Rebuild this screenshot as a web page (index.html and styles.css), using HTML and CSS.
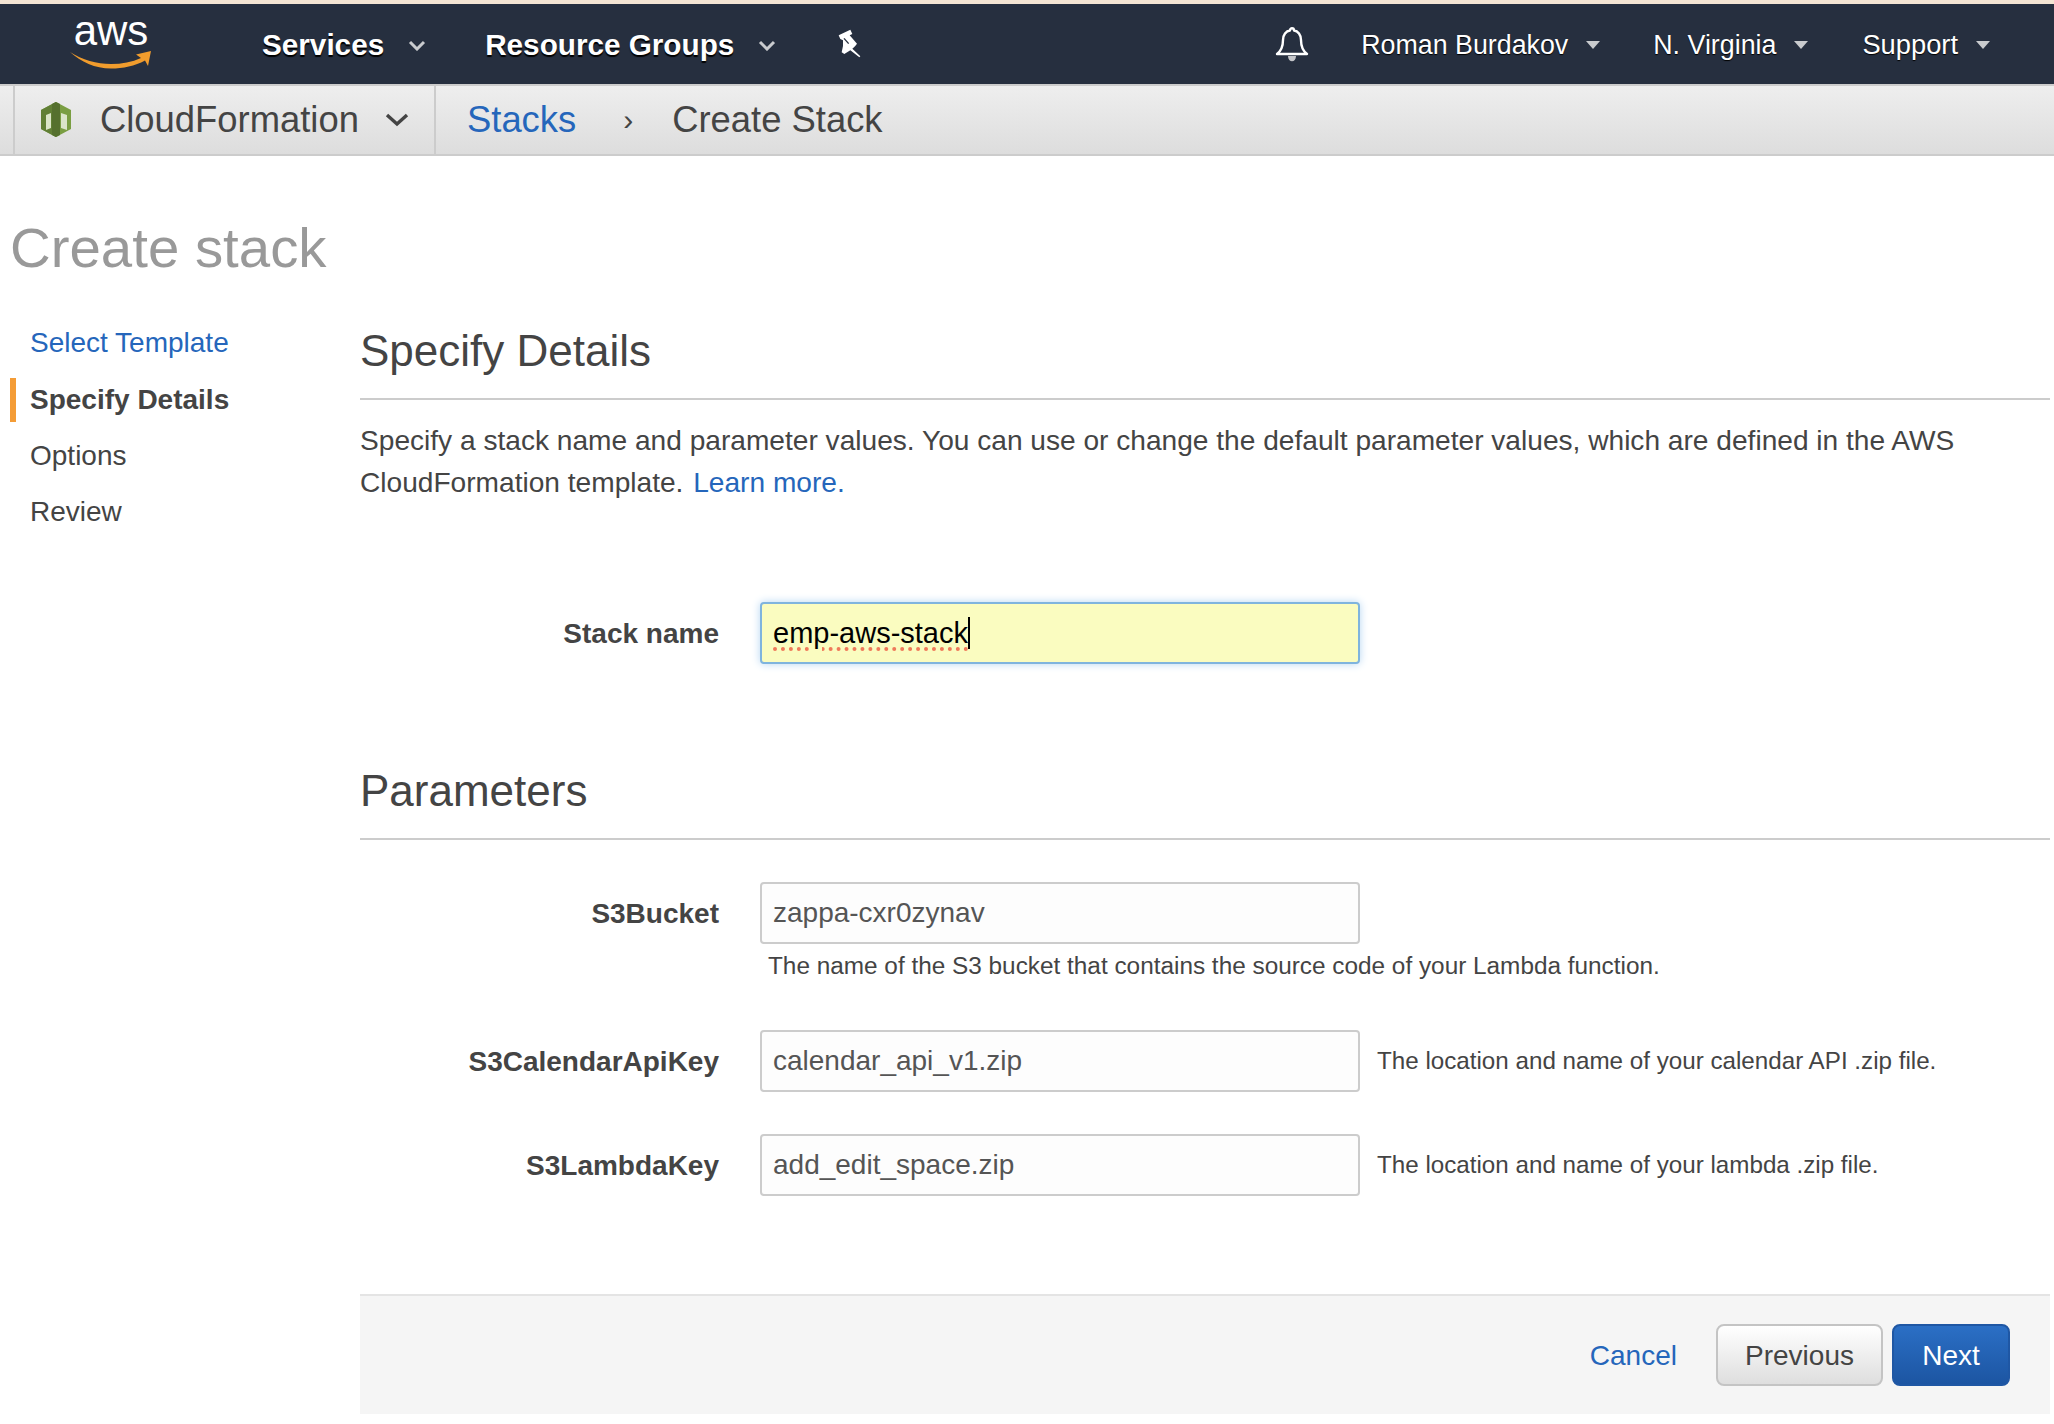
FILE: index.html
```html
<!DOCTYPE html>
<html lang="en">
<head>
  <meta charset="UTF-8">
  <title>Create stack</title>
  <link rel="stylesheet" href="styles.css">
</head>
<body>
  <header class="topbar">
    <a class="logo">
      <span class="logo-text">aws</span>
      <svg class="logo-smile" width="84" height="20" viewBox="0 0 84 20">
        <path d="M1 2C13 10 28 14 42 14C53 14 63 12 72 8L67 4.5L82 1L79 16L76 10.5C66 16 54 18.5 42 18.5C26 18.5 12 12 1 2Z" fill="#f09c2d"/>
      </svg>
    </a>
    <a class="nav-main services">Services</a>
    <svg class="chev" width="18" height="11" viewBox="0 0 18 11"><path d="M2 2L9 9L16 2" fill="none" stroke="#c9cbce" stroke-width="3"/></svg>
    <a class="nav-main groups">Resource Groups</a>
    <svg class="chev" width="18" height="11" viewBox="0 0 18 11"><path d="M2 2L9 9L16 2" fill="none" stroke="#c9cbce" stroke-width="3"/></svg>
    <svg class="pin" width="25" height="30" viewBox="38 25 75 90">
      <path d="M43 47L78 30L84 43L76 47L98 72L92 80L84 87L108 110L105 113L78 92L60 103L52 98Q58 80 56 62L48 58Z" fill="#fff"/>
      <path d="M59 56L73 72" stroke="#262f3f" stroke-width="4"/>
    </svg>
    <svg class="bell" width="34" height="36" viewBox="0 0 34 36">
      <path d="M2 27C6 24 8 20 8 13C8 8 11 4 15 3.5C15 .5 19 .5 19 3.5C23 4 26 8 26 13C26 20 28 24 32 27Z" fill="none" stroke="#fff" stroke-width="2.4" stroke-linejoin="round"/>
      <path d="M13 29C13 36 21 36 21 29Z" fill="#c4c6ca"/>
    </svg>
    <a class="nav-user user">Roman Burdakov</a><span class="caret"></span>
    <a class="nav-user region">N. Virginia</a><span class="caret"></span>
    <a class="nav-user support">Support</a><span class="caret"></span>
  </header>

  <nav class="subbar">
    <div class="service-menu">
      <svg class="cf-icon" width="32" height="36" viewBox="0 0 32 36">
        <path d="M16 0L31 8V27L16 35L1 27V8Z" fill="#7a9e42"/>
        <path d="M16 0V35L1 27V8Z" fill="#617f35"/>
        <path d="M16 0L20 2V33L16 35L12 33V2Z" fill="#55702e"/>
        <path d="M6 13L11 11V26L6 28Z M21 11L27 13V28L21 26Z" fill="#dbe5c9"/>
      </svg>
      <span class="service-name">CloudFormation</span>
      <svg class="service-chev" width="24" height="14" viewBox="0 0 24 14"><path d="M2 2L12 11L22 2" fill="none" stroke="#444" stroke-width="3.4"/></svg>
    </div>
    <a class="crumb-link">Stacks</a>
    <span class="crumb-sep">›</span>
    <span class="crumb">Create Stack</span>
  </nav>

  <h1 class="page-title">Create stack</h1>

  <div class="layout">
    <ul class="steps">
      <li class="step step-link">Select Template</li>
      <li class="step step-active">Specify Details</li>
      <li class="step">Options</li>
      <li class="step">Review</li>
    </ul>

    <main class="content">
      <h2 class="section-title">Specify Details</h2>
      <p class="intro">Specify a stack name and parameter values. You can use or change the default parameter values, which are defined in the AWS CloudFormation template. <a class="link learn">Learn more.</a></p>

      <div class="row row-name">
        <label class="row-label">Stack name</label>
        <div class="field field-focus"><span class="typed">emp-aws-stack</span><span class="cursor"></span></div>
      </div>

      <h2 class="section-title params-title">Parameters</h2>

      <div class="row row-bucket">
        <label class="row-label">S3Bucket</label>
        <div class="field">zappa-cxr0zynav</div>
      </div>
      <div class="help-below">The name of the S3 bucket that contains the source code of your Lambda function.</div>

      <div class="row row-calendar">
        <label class="row-label">S3CalendarApiKey</label>
        <div class="field">calendar_api_v1.zip</div>
        <span class="help-side">The location and name of your calendar API .zip file.</span>
      </div>

      <div class="row row-lambda">
        <label class="row-label">S3LambdaKey</label>
        <div class="field">add_edit_space.zip</div>
        <span class="help-side">The location and name of your lambda .zip file.</span>
      </div>

      <footer class="actions">
        <a class="link cancel">Cancel</a>
        <button class="btn btn-prev">Previous</button>
        <button class="btn btn-next">Next</button>
      </footer>
    </main>
  </div>
</body>
</html>
```

FILE: styles.css
```css
* {
  box-sizing: border-box;
}
body {
  margin: 0;
  font-family: "Liberation Sans", Arial, sans-serif;
  color: #444;
  background: #fff;
}
.topbar {
  display: flex;
  align-items: center;
  height: 84px;
  padding-top: 2px;
  border-top: 4px solid #f3e4d3;
  background: #262f3f;
  color: #fff;
}
.logo {
  display: flex;
  flex-direction: column;
  align-items: center;
  width: 84px;
  margin: 0 0 4px 69px;
}
.logo-text {
  font-size: 42px;
  line-height: 30px;
  height: 30px;
}
.logo-smile {
  margin-top: 4px;
}
.nav-main {
  font-size: 29.7px;
  font-weight: bold;
  text-shadow: 0 2px 1px #000;
}
.services {
  margin-left: 109px;
}
.groups {
  margin-left: 59px;
}
.chev {
  margin-left: 24px;
}
.pin {
  margin: 0 0 4px 61px;
}
.bell {
  margin-left: auto;
}
.nav-user {
  margin-left: 53px;
  font-size: 26.8px;
  text-shadow: 0 1px 1px #000;
}
.user {
  margin-left: 52px;
}
.support {
  margin-left: 54px;
  font-size: 27.3px;
}
.caret {
  width: 0;
  height: 0;
  margin-left: 18px;
  border-top: 8px solid #c9cbce;
  border-left: 7px solid transparent;
  border-right: 7px solid transparent;
}
.caret:last-child {
  margin-right: 64px;
}
.subbar {
  display: flex;
  align-items: center;
  height: 72px;
  border-top: 2px solid #ccc;
  border-bottom: 2px solid #ccc;
  background: linear-gradient(#eee, #ddd);
  padding-left: 13px;
  font-size: 36.4px;
}
.service-menu {
  display: flex;
  align-items: center;
  height: 100%;
  width: 423px;
  border-left: 2px solid #ccc;
  border-right: 2px solid #ccc;
  padding-left: 25px;
}
.service-name {
  margin-left: 28px;
}
.service-chev {
  margin-left: 26px;
}
.crumb-link {
  margin-left: 31px;
  color: #2566bb;
}
.crumb-sep {
  margin-left: 47px;
  font-size: 30px;
}
.crumb {
  margin-left: 39px;
}
.page-title {
  margin: 60px 0 0 10px;
  font-size: 56.4px;
  line-height: 64px;
  font-weight: normal;
  color: #999;
}
.layout {
  display: grid;
  grid-template-columns: 360px 1fr;
  margin-top: 40px;
  padding-right: 4px;
}
.steps {
  list-style: none;
  margin: 1px 0 0;
  padding: 0;
}
.step {
  height: 44px;
  margin-bottom: 12px;
  margin-left: 10px;
  padding-left: 14px;
  font-size: 28px;
  line-height: 44px;
  border-left: 6px solid transparent;
}
.step-link {
  margin-bottom: 13px;
  color: #2566bb;
}
.step-active {
  border-left-color: #f49c36;
  font-weight: bold;
}
.section-title {
  margin: 3px 0 0;
  height: 77px;
  font-size: 44px;
  line-height: 56px;
  font-weight: normal;
  border-bottom: 2px solid #ccc;
}
.intro {
  margin: 20px 0 0;
  font-size: 28.12px;
  line-height: 42px;
}
.link {
  color: #2566bb;
}
.learn {
  margin-left: 2px;
}
.row {
  display: flex;
  align-items: center;
}
.row-label {
  width: 359px;
  margin-right: 41px;
  padding-top: 2px;
  text-align: right;
  font-size: 28px;
  font-weight: bold;
}
.field {
  width: 600px;
  height: 62px;
  padding: 0 11px;
  border: 2px solid #ccc;
  border-radius: 4px;
  background: #fdfdfd;
  font-size: 28px;
  line-height: 58px;
  color: #555;
}
.field-focus {
  display: flex;
  align-items: center;
  border-color: #7fb4de;
  background: #fafcc0;
  box-shadow: 0 0 8px #b6d6f2;
  font-size: 29px;
  color: #000;
}
.typed {
  line-height: 36px;
  text-decoration: underline dotted #ef7a5a 4px;
  text-underline-offset: 4px;
}
.cursor {
  width: 2px;
  height: 32px;
  background: #000;
}
.row-name {
  margin-top: 98px;
}
.params-title {
  margin-top: 99px;
}
.row-bucket {
  margin-top: 42px;
}
.help-below {
  margin: 7px 0 0 408px;
  font-size: 24.35px;
  line-height: 30px;
}
.row-calendar {
  margin-top: 49px;
}
.row-lambda {
  margin-top: 42px;
}
.help-side {
  margin-left: 17px;
  font-size: 24.2px;
}
.actions {
  display: flex;
  align-items: center;
  justify-content: flex-end;
  height: 120px;
  margin-top: 98px;
  padding-right: 40px;
  border-top: 2px solid #e4e4e4;
  background: #f5f5f5;
}
.cancel {
  margin-right: 39px;
  padding-top: 2px;
  font-size: 28px;
}
.btn {
  height: 62px;
  padding-top: 3px;
  border-radius: 8px;
  font-family: inherit;
  font-size: 28px;
}
.btn-prev {
  width: 167px;
  border: 2px solid #c4c4c4;
  background: linear-gradient(#fff, #dedede);
  color: #444;
}
.btn-next {
  width: 118px;
  margin-left: 9px;
  border: 2px solid #1f57a4;
  background: linear-gradient(#2b6fc5, #1c55a2);
  color: #fff;
}
```
